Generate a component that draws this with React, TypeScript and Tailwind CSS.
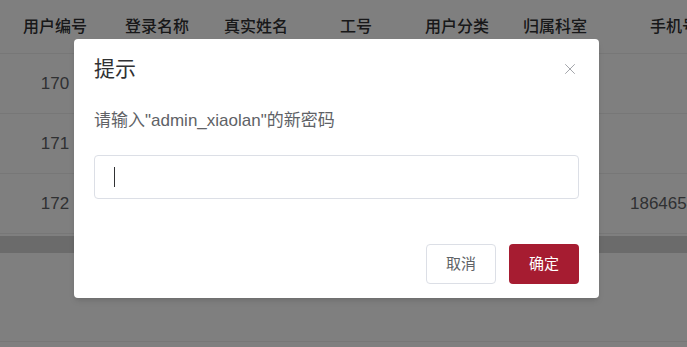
import { X } from "lucide-react";

const columns = [
  { title: "用户编号", w: "w-[110px]" },
  { title: "登录名称", w: "w-[94px]" },
  { title: "真实姓名", w: "w-[104px]" },
  { title: "工号", w: "w-[96px]" },
  { title: "用户分类", w: "w-[106px]" },
  { title: "归属科室", w: "w-[90px]" },
  { title: "手机号码", w: "w-[164px]" },
];

const rows = [
  ["170", "", "", "", "", "", ""],
  ["171", "", "", "", "", "", ""],
  ["172", "", "", "", "", "", "18646541234"],
];

const App = () => {
  return (
    <div
      className="relative w-[687px] h-[347px] overflow-hidden bg-white"
      style={{ fontFamily: '"Liberation Sans", Arial, "Noto Sans CJK SC", sans-serif' }}
    >
      <div className="flex flex-col whitespace-nowrap">
        <div className="flex h-[54px] border-b border-[#eeeeee] text-[16px] font-medium text-[#303133]">
          {columns.map((c) => (
            <div key={c.title} className={`${c.w} shrink-0 flex items-center justify-center`}>
              {c.title}
            </div>
          ))}
        </div>
        {rows.map((r, i) => (
          <div key={i} className="flex h-[60px] border-b border-[#eeeeee] text-[17px] text-[#606266]">
            {r.map((cell, j) => (
              <div key={j} className={`${columns[j].w} shrink-0 flex items-center justify-center`}>
                {cell}
              </div>
            ))}
          </div>
        ))}
        <div className="mt-[2px] h-[17px] bg-[#d6d6d6]" />
        <div className="h-[89px] border-b border-[#eeeeee]" />
      </div>

      <div className="absolute inset-0 bg-black/50" />

      <div className="absolute left-[74px] top-[39px] w-[525px] h-[259px] bg-white rounded-[4px] shadow-md flex flex-col">
        <div className="flex items-center justify-between pl-[20px] pr-[20px] pt-[16px]">
          <span className="text-[21px] text-[#303133] leading-[28px]">提示</span>
          <X size={18} strokeWidth={1.1} className="text-[#909399]" />
        </div>
        <div className="px-[20px] pt-[26px] text-[17px] text-[#606266] leading-[24px]">
          请输入"admin_xiaolan"的新密码
        </div>
        <div className="px-[20px] pt-[22px]">
          <div className="h-[44px] border border-[#dcdfe6] rounded-[4px] flex items-center pl-[19px]">
            <div className="w-px h-[20px] bg-[#303133]" />
          </div>
        </div>
        <div className="flex justify-end gap-[13px] px-[20px] pt-[45px]">
          <button className="w-[70px] h-[40px] border border-[#dcdfe6] rounded-[4px] bg-white text-[15px] text-[#606266]">
            取消
          </button>
          <button className="w-[70px] h-[40px] rounded-[4px] bg-[#a61c31] text-[15px] text-white">
            确定
          </button>
        </div>
      </div>
    </div>
  );
};

export default App;
